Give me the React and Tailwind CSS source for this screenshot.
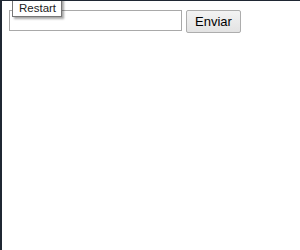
export default function App() {
  return (
    <div className="relative w-[300px] h-[250px] bg-white border-t border-l-2 border-[#1f2733] overflow-hidden font-['Liberation_Sans',Arial,sans-serif]">
      <div className="flex items-start gap-[4px] pl-[7px] pt-[9px]">
        <input
          type="text"
          className="w-[173px] h-[21px] border border-[#a9a9a9] bg-white outline-none px-1 text-[13px]"
        />
        <button className="h-[23px] w-[55px] border border-[#adadad] rounded-[2px] bg-gradient-to-b from-[#f3f3f3] to-[#e3e3e3] text-[13px] text-black leading-none">
          Enviar
        </button>
      </div>
      <div className="absolute left-[10px] top-[-4px] w-[50px] h-[20px] bg-white border border-[#767676] shadow-[2px_2px_2px_rgba(0,0,0,0.35)] pl-[6px] pt-[5px] text-[11.5px] leading-none text-[#222]">
        Restart
      </div>
    </div>
  );
}
